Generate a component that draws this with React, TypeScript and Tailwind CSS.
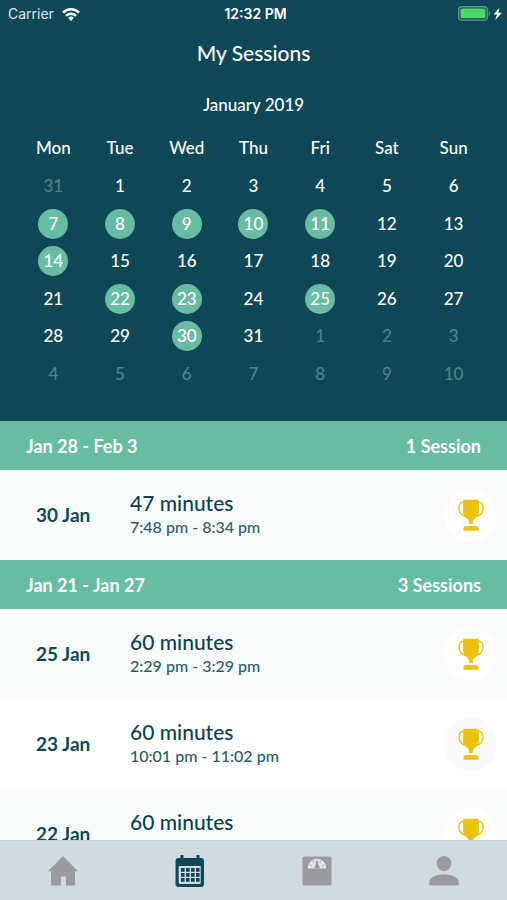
import clsx from "clsx";

const weekdays = ["Mon", "Tue", "Wed", "Thu", "Fri", "Sat", "Sun"];

// negative numbers are days of the previous or next month
const weeks = [
  [-31, 1, 2, 3, 4, 5, 6],
  [7, 8, 9, 10, 11, 12, 13],
  [14, 15, 16, 17, 18, 19, 20],
  [21, 22, 23, 24, 25, 26, 27],
  [28, 29, 30, 31, -1, -2, -3],
  [-4, -5, -6, -7, -8, -9, -10],
];

const sessionDays = [7, 8, 9, 10, 11, 14, 22, 23, 25, 30];

const groups = [
  {
    range: "Jan 28 - Feb 3",
    count: "1 Session",
    sessions: [
      { day: "30 Jan", length: "47 minutes", time: "7:48 pm - 8:34 pm" },
    ],
  },
  {
    range: "Jan 21 - Jan 27",
    count: "3 Sessions",
    sessions: [
      { day: "25 Jan", length: "60 minutes", time: "2:29 pm - 3:29 pm" },
      { day: "23 Jan", length: "60 minutes", time: "10:01 pm - 11:02 pm" },
      { day: "22 Jan", length: "60 minutes", time: "" },
    ],
  },
];

function StatusBar() {
  return (
    <div className="grid h-7 grid-cols-3 items-center pl-2 pr-1 font-['Inter',sans-serif] text-sm">
      <div className="flex items-center gap-2 text-[#dce8ea]">
        Carrier
        <svg viewBox="0 0 18 13" className="h-[13px] w-[18px]" fill="none" stroke="white" strokeWidth="2.4">
          <path d="M1 4.6a11.4 11.4 0 0 1 16 0" />
          <path d="M4 7.8a7.1 7.1 0 0 1 10 0" />
          <path d="M9 13 6.1 10a4.1 4.1 0 0 1 5.8 0z" fill="white" stroke="none" />
        </svg>
      </div>
      <div className="text-center font-semibold text-white">12:32 PM</div>
      <div className="flex items-center justify-end">
        <svg viewBox="0 0 45 16" className="h-4 w-[45px]">
          <rect x="0.7" y="0.7" width="28.6" height="13.4" rx="3.4" fill="none" stroke="#6d8e99" strokeWidth="1.4" />
          <rect x="2.5" y="2.5" width="25" height="9.8" rx="1.6" fill="#4cd964" />
          <path d="M30.7 5c2 .8 2 4 0 4.8z" fill="#6d8e99" />
          <path d="M41.5 1.5 35.6 8.4h3.4L37.2 14 44 6.800h-3.700z" fill="white" />
        </svg>
      </div>
    </div>
  );
}

function Calendar() {
  return (
    <div className="px-5 pb-[29px]">
      <table className="w-full table-fixed text-center text-[17px] leading-5">
        <thead>
          <tr className="h-[38px]">
            {weekdays.map((name) => (
              <th key={name} scope="col" className="p-0 font-medium">
                {name}
              </th>
            ))}
          </tr>
        </thead>
        <tbody>
          {weeks.map((week, i) => (
            <tr key={i} className="h-[37px] odd:h-[38px]">
              {week.map((day) => (
                <td key={day} className="p-0">
                  <button
                    type="button"
                    className={clsx(
                      "inline-flex size-[30px] items-center justify-center rounded-full align-middle font-medium",
                      sessionDays.includes(day) && "bg-[#68bca2]",
                      day < 0 && "text-[#51808d]"
                    )}
                  >
                    {Math.abs(day)}
                  </button>
                </td>
              ))}
            </tr>
          ))}
        </tbody>
      </table>
    </div>
  );
}

function Trophy() {
  return (
    <svg viewBox="0 0 26 32" className="h-8 w-[26px]" fill="#ebc30f">
      <path d="M5.5.8h15L20.900 3v10c0 3-1.600 4.800-3.400 6.300-1.400 1.200-2.600 2.100-2.600 3.700v2h-3.800v-2c0-1.600-1.200-2.500-2.600-3.700C6.700 17.800 5.100 16 5.100 13V3z" />
      <path
        d="M5.500 3.300C2.400 3.200 1 5.800 1 9c0 4.500 3 7.800 7.500 8.800M20.500 3.300C23.600 3.200 25 5.800 25 9c0 4.500-3 7.800-7.500 8.800"
        fill="none"
        stroke="#ebc30f"
        strokeWidth="1.5"
      />
      <path d="M7 27h12l1.500 1.700v3h-15v-3z" />
    </svg>
  );
}

function HomeIcon() {
  return (
    <svg viewBox="0 0 32 32" className="size-8" fill="currentColor">
      <path d="M16 1 31 16.200h-3V30.500h-9V21.500h-5v9H4V16.200H1z" />
    </svg>
  );
}

function CalendarIcon() {
  return (
    <svg viewBox="0 0 32 32" className="size-8" fill="currentColor">
      <path
        fillRule="evenodd"
        d="M6.500 0h3v3h13V0h3v3H27a3 3 0 0 1 3 3v23a3 3 0 0 1-3 3H4.500a3 3 0 0 1-3-3V6a3 3 0 0 1 3-3h2zM4.700 11v16.500A1.500 1.500 0 0 0 6.200 29h19a1.500 1.500 0 0 0 1.500-1.500V11z"
      />
      {[13, 18, 23].map((y) =>
        [7, 12, 17, 22].map((x) => (
          <rect key={`${x}-${y}`} x={x} y={y} width="3.6" height="3.8" />
        ))
      )}
    </svg>
  );
}

function ScaleIcon() {
  return (
    <svg viewBox="0 0 32 32" className="size-8">
      <rect x="1.5" y="1.500" width="29" height="29" rx="1.8" fill="currentColor" />
      <path d="M6.700 13.500a9.300 9.800 0 0 1 18.600 0z" fill="#e0e5e8" />
      <path d="M12 5.500l1 2.500M20 5.500l-1 2.500M8.500 9.500l2.500 1.500M23.500 9.500l-2.500 1.500" stroke="#9b9b9f" strokeWidth="0.7" />
      <path d="M15.400 5.500h1.200l1 5a2.500 2.500 0 0 1 1 3h-5.200a2.500 2.500 0 0 1 1-3z" fill="#9b9b9f" />
    </svg>
  );
}

function PersonIcon() {
  return (
    <svg viewBox="0 0 32 32" className="size-8" fill="currentColor">
      <circle cx="16" cy="8.500" r="7.400" />
      <path d="M1.300 30.500V27c0-5 8-7.800 14.700-7.800S30.700 22 30.700 27v3.500z" />
    </svg>
  );
}

const tabs = [
  { title: "Home", url: "#home", icon: HomeIcon },
  { title: "Sessions", url: "#sessions", icon: CalendarIcon },
  { title: "Weight", url: "#weight", icon: ScaleIcon },
  { title: "Profile", url: "#profile", icon: PersonIcon },
];

function TabBar() {
  return (
    <nav className="grid h-[60px] shrink-0 grid-cols-4 border-t border-[#c4d0d4] bg-[#cfdbdf]">
      {tabs.map((tab) => (
        <a
          key={tab.title}
          href={tab.url}
          aria-label={tab.title}
          className={clsx(
            "flex items-center justify-center",
            tab.title === "Sessions" ? "text-[#0e4857]" : "text-[#9b9b9f]"
          )}
        >
          <tab.icon />
        </a>
      ))}
    </nav>
  );
}

export default function App() {
  return (
    <div className="flex h-screen flex-col bg-white font-['Lato',sans-serif] text-[#0e4857]">
      <header className="shrink-0 bg-[#0e4857] text-white">
        <StatusBar />
        <h1 className="pt-[9px] text-center text-[21px] leading-8 font-medium">My Sessions</h1>
        <h2 className="pt-6 pb-3 text-center text-[17px] leading-6 font-medium">January 2019</h2>
        <Calendar />
      </header>

      <main className="min-h-0 flex-1 overflow-y-auto [scrollbar-width:none]">
        {groups.map((group) => (
          <section key={group.range}>
            <div className="flex h-[49px] items-center justify-between bg-[#68bca2] px-[26px] text-lg font-bold text-white">
              <h3>{group.range}</h3>
              <span>{group.count}</span>
            </div>
            <ul>
              {group.sessions.map((session) => (
                <li
                  key={session.day}
                  className="group flex h-[90px] items-center bg-white pr-[10px] odd:bg-[#fafcfb]"
                >
                  <div className="w-[130px] pl-9 text-[19px] font-bold">{session.day}</div>
                  <div className="flex-1">
                    <div className="text-[21px] leading-6 font-medium text-[#0d3f4e]">{session.length}</div>
                    <div className="h-6 text-base leading-6 font-medium text-[#2a5c6a]">{session.time}</div>
                  </div>
                  <div className="flex size-[53px] items-center justify-center rounded-full bg-[#fafafa] group-odd:bg-white">
                    <Trophy />
                  </div>
                </li>
              ))}
            </ul>
          </section>
        ))}
      </main>

      <TabBar />
    </div>
  );
}
